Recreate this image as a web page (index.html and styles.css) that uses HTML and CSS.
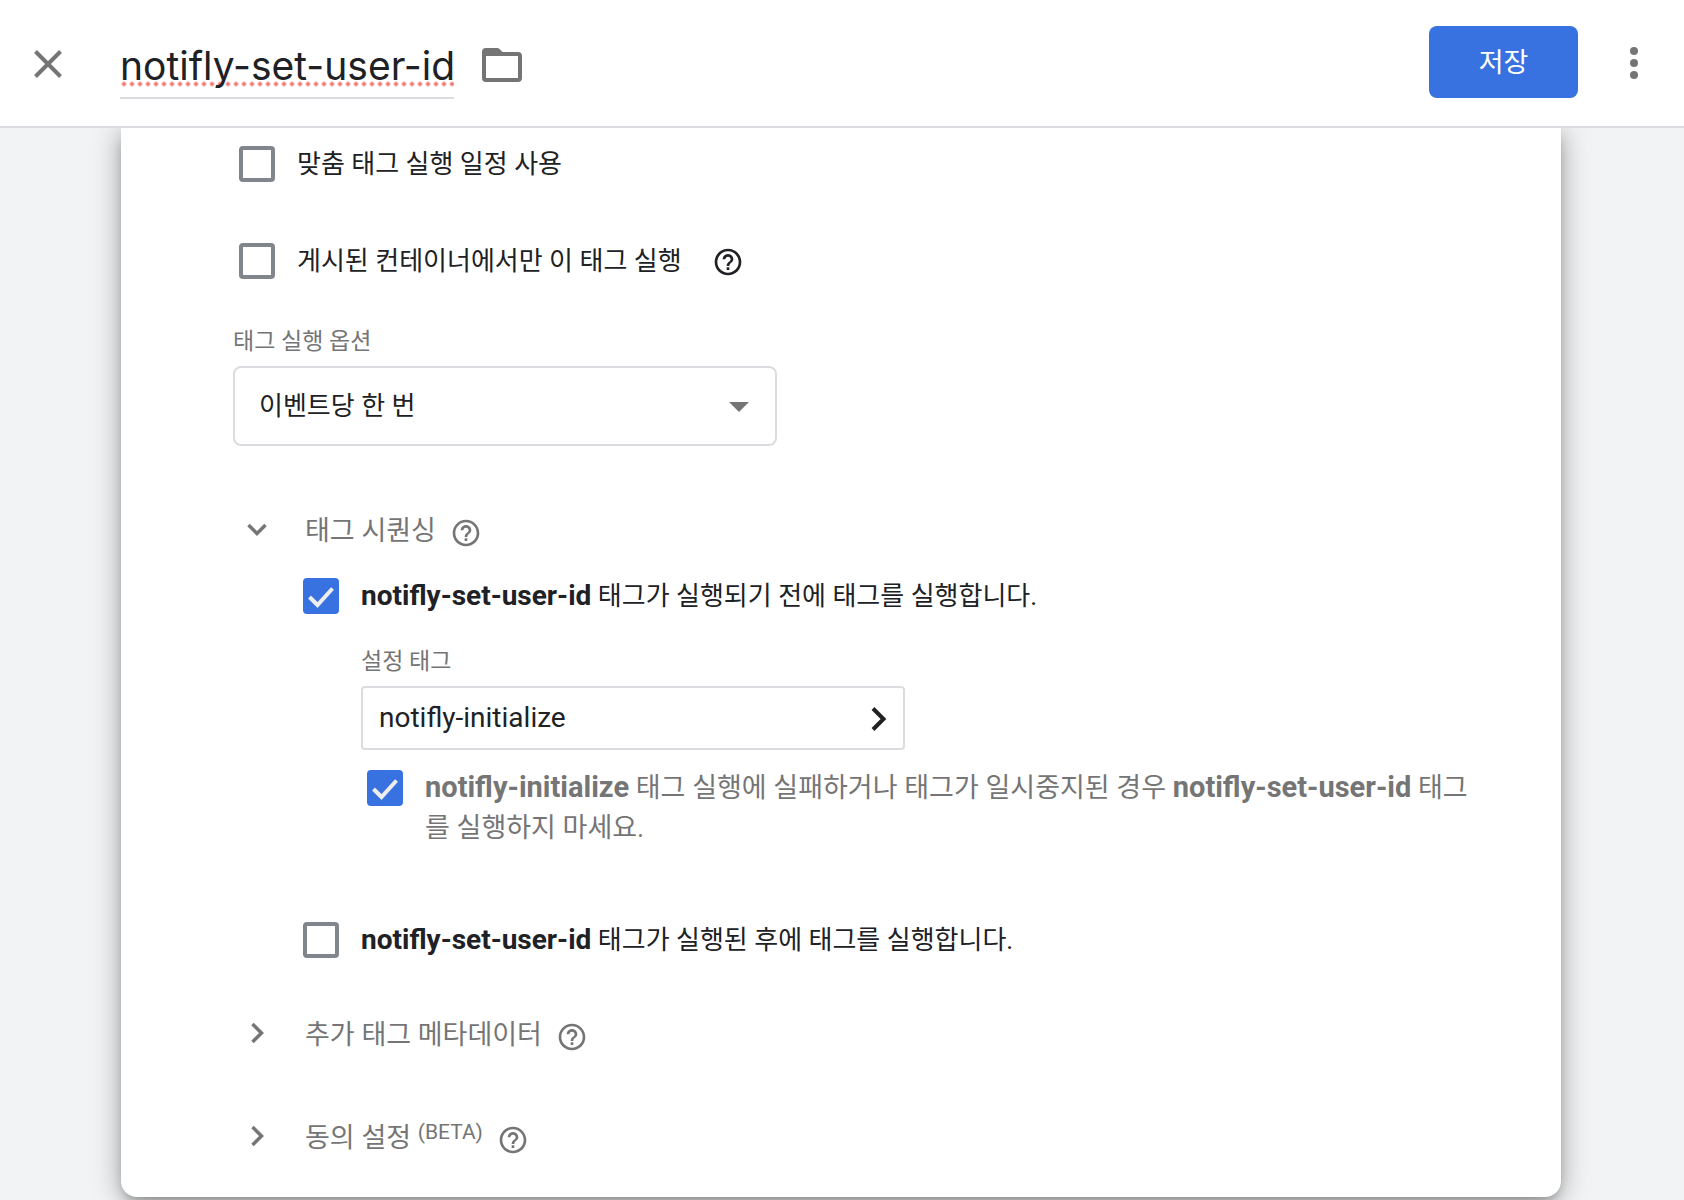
FILE: index.html
```html
<!DOCTYPE html>
<html lang="ko">
<head>
    <meta charset="UTF-8">
    <meta name="viewport" content="width=device-width, initial-scale=1.0">
    <title>notifly-set-user-id</title>
    <link rel="stylesheet" href="styles.css">
</head>
<body>
    <!-- shared icons -->
    <svg class="sprite" aria-hidden="true">
        <symbol id="icon-help" viewBox="0 0 24 24">
            <path d="M11 18h2v-2h-2v2zm1-16C6.48 2 2 6.48 2 12s4.48 10 10 10 10-4.48 10-10S17.52 2 12 2zm0 18c-4.41 0-8-3.59-8-8s3.59-8 8-8 8 3.59 8 8-3.59 8-8 8zm0-14c-2.21 0-4 1.79-4 4h2c0-1.1.9-2 2-2s2 .9 2 2c0 2-3 1.75-3 5h2c0-2.25 3-2.5 3-5 0-2.21-1.79-4-4-4z"/>
        </symbol>
        <symbol id="icon-down" viewBox="0 0 40 40">
            <path d="M11.5 14L20 22.500l8.500-8.500" fill="none" stroke="currentColor" stroke-width="3.500"/>
        </symbol>
        <symbol id="icon-right" viewBox="0 0 40 40">
            <path d="M15.500 9L24.500 18l-9 9" fill="none" stroke="currentColor" stroke-width="3.500"/>
        </symbol>
    </svg>

    <header class="header">
        <button class="icon-btn close" type="button" aria-label="닫기">
            <svg width="28" height="28" viewBox="0 0 28 28"><path d="M1.500 1.500l25 25M26.500 1.500l-25 25" stroke="currentColor" stroke-width="4"/></svg>
        </button>
        <input class="title" type="text" aria-label="태그 이름" value="notifly-set-user-id" spellcheck="false">
        <button class="icon-btn folder" type="button" aria-label="폴더로 이동">
            <svg width="40" height="34" viewBox="0 0 40 34"><path fill-rule="evenodd" d="M4 0h11c1.500 0 2 .5 3 1.500L20.500 4H36a4 4 0 0 1 4 4v22a4 4 0 0 1-4 4H4a4 4 0 0 1-4-4V4a4 4 0 0 1 4-4zM4 8v22h32V8z"/></svg>
        </button>
        <button class="save" type="button">저장</button>
        <button class="icon-btn more" type="button" aria-label="더보기">
            <svg width="8" height="32" viewBox="0 0 8 32"><circle cx="4" cy="4" r="4"/><circle cx="4" cy="16" r="4"/><circle cx="4" cy="28" r="4"/></svg>
        </button>
    </header>

    <main class="card">
        <div class="check-row">
            <input type="checkbox" id="schedule">
            <label for="schedule">맞춤 태그 실행 일정 사용</label>
        </div>
        <div class="check-row published">
            <input type="checkbox" id="published">
            <label for="published">게시된 컨테이너에서만 이 태그 실행</label>
            <button class="icon-btn help" type="button" aria-label="도움말"><svg><use href="#icon-help"/></svg></button>
        </div>

        <div class="field firing">
            <label for="firing">태그 실행 옵션</label>
            <div class="select">
                <select id="firing">
                    <option>이벤트당 한 번</option>
                </select>
            </div>
        </div>

        <section class="sequencing">
            <div class="section-head">
                <button class="toggle" type="button" aria-expanded="true"><svg><use href="#icon-down"/></svg>태그 시퀀싱</button>
                <button class="icon-btn help" type="button" aria-label="도움말"><svg><use href="#icon-help"/></svg></button>
            </div>
            <div class="section-body">
                <div class="check-row">
                    <input type="checkbox" id="before" checked>
                    <label for="before"><strong>notifly-set-user-id</strong> 태그가 실행되기 전에 태그를 실행합니다.</label>
                </div>
                <div class="setup">
                    <div class="field">
                        <label for="setup">설정 태그</label>
                        <button class="picker" id="setup" type="button">notifly-initialize
                            <svg width="16" height="26" viewBox="0 0 16 26"><path d="M2 3.500L12.500 14 2 24.500" fill="none" stroke="currentColor" stroke-width="4"/></svg>
                        </button>
                    </div>
                    <div class="check-row muted">
                        <input type="checkbox" id="stop" checked>
                        <label for="stop"><strong>notifly-initialize</strong> 태그 실행에 실패하거나 태그가 일시중지된 경우 <strong>notifly-set-user-id</strong> 태그를 실행하지 마세요.</label>
                    </div>
                </div>
                <div class="check-row">
                    <input type="checkbox" id="after">
                    <label for="after"><strong>notifly-set-user-id</strong> 태그가 실행된 후에 태그를 실행합니다.</label>
                </div>
            </div>
        </section>

        <section class="metadata">
            <div class="section-head">
                <button class="toggle" type="button" aria-expanded="false"><svg><use href="#icon-right"/></svg>추가 태그 메타데이터</button>
                <button class="icon-btn help" type="button" aria-label="도움말"><svg><use href="#icon-help"/></svg></button>
            </div>
        </section>

        <section class="consent">
            <div class="section-head">
                <button class="toggle" type="button" aria-expanded="false"><svg><use href="#icon-right"/></svg><span>동의 설정 <sup>(BETA)</sup></span></button>
                <button class="icon-btn help" type="button" aria-label="도움말"><svg><use href="#icon-help"/></svg></button>
            </div>
        </section>
    </main>
</body>
</html>
```
FILE: styles.css
```css
*{
    box-sizing: border-box;
}

body{
    margin: 0;
    min-height: 100vh;
    background-color: #f1f3f4;
    font-family: Roboto, "Noto Sans CJK KR", sans-serif;
    font-size: 26px;
    line-height: 40px;
    color: #202124;
    overflow-x: hidden;
}

button, input, select{
    font: inherit;
    color: inherit;
}

button{
    padding: 0;
    border: none;
    background: none;
    cursor: pointer;
}

svg{
    display: block;
    fill: currentColor;
}

strong{
    font-size: 28px;
    font-weight: 700;
    line-height: 32px;
}

.sprite{
    position: absolute;
    width: 0;
    height: 0;
}

.icon-btn{
    flex: none;
    color: #757575;
}

/* header */
.header{
    position: relative;
    z-index: 1;
    display: flex;
    align-items: center;
    height: 128px;
    padding: 0 46px 2px 34px;
    background-color: #fff;
    border-bottom: 2px solid #dadce0;
}

.close{
    margin-top: 4px;
}

.folder{
    margin-top: 6px;
}

.more{
    margin-top: 2px;
}

.title{
    width: 334px;
    height: 66px;
    margin: 8px 28px 0 58px;
    padding: 0;
    border: none;
    border-bottom: 2px solid #dadce0;
    outline: none;
    font-family: Inter, Roboto, sans-serif;
    font-size: 39px;
    /* spelling marks under the name */
    background: radial-gradient(circle, #f0736a 1px, transparent 3px) 0 48px / 8px 6px repeat-x;
}

.save{
    width: 149px;
    height: 72px;
    margin: 0 52px 0 auto;
    padding-top: 2px;
    border-radius: 8px;
    background-color: #3872e0;
    color: #fff;
    font-size: 27px;
}

/* card */
.card{
    margin: 0 123px 3px 121px;
    padding: 16px 88px 39px 112px;
    border-radius: 0 0 16px 16px;
    background-color: #fff;
    box-shadow: 0 8px 12px -4px rgba(0, 0, 0, .25), 0 4px 28px rgba(0, 0, 0, .35);
}

.check-row{
    display: flex;
    align-items: flex-start;
    gap: 22px;
    padding-left: 6px;
}

.check-row input{
    appearance: none;
    flex: none;
    width: 36px;
    height: 36px;
    margin: 2px 0;
    border: 4px solid #80868b;
    border-radius: 4px;
}

.check-row input:checked{
    border: none;
    background: #3872e0 url("data:image/svg+xml,%3Csvg xmlns='http://www.w3.org/2000/svg' viewBox='0 0 36 36'%3E%3Cpath d='M6.500 19l8 8L29.500 10.500' fill='none' stroke='%23eee' stroke-width='4'/%3E%3C/svg%3E");
}

.help svg{
    width: 32px;
    height: 32px;
}

.published{
    margin-top: 57px;
}

.published .help{
    margin: 5px 0 0 8px;
    color: #202124;
}

.field label{
    display: block;
    margin-bottom: 8px;
    font-size: 23px;
    line-height: 32px;
    color: #757575;
}

.firing{
    margin-top: 45px;
}

.select{
    position: relative;
    max-width: 544px;
}

.select::after{
    content: "";
    position: absolute;
    top: 36px;
    right: 28px;
    border: 10px solid transparent;
    border-top-color: #757575;
    border-bottom: none;
    pointer-events: none;
}

select{
    appearance: none;
    width: 100%;
    height: 80px;
    padding: 0 24px;
    border: 2px solid #dadce0;
    border-radius: 8px;
    background-color: #fff;
}

/* collapsible sections */
.sequencing{
    margin-top: 65px;
}

.metadata{
    margin-top: 55px;
}

.consent{
    margin-top: 63px;
}

.section-head{
    display: flex;
    align-items: center;
    gap: 14px;
    height: 40px;
    padding-left: 4px;
    font-size: 27px;
    color: #757575;
}

.toggle{
    display: flex;
    align-items: center;
    gap: 28px;
}

.toggle svg{
    width: 40px;
    height: 40px;
}

.section-head .help{
    margin-top: 4px;
}

sup{
    font-size: 21px;
    line-height: 0;
    vertical-align: 8px;
}

.section-body{
    margin-top: 25px;
    padding-left: 64px;
}

.setup{
    margin: 30px 0 72px;
    padding-left: 64px;
}

.picker{
    display: flex;
    align-items: center;
    justify-content: space-between;
    width: 100%;
    max-width: 544px;
    height: 64px;
    padding: 0 16px;
    border: 2px solid #dadce0;
    border-radius: 4px;
    font-size: 28px;
}

.muted{
    margin-top: 18px;
    font-size: 27px;
    color: #757575;
}

.muted label{
    word-break: break-all;
}

.muted strong{
    font-size: 29px;
}
```
